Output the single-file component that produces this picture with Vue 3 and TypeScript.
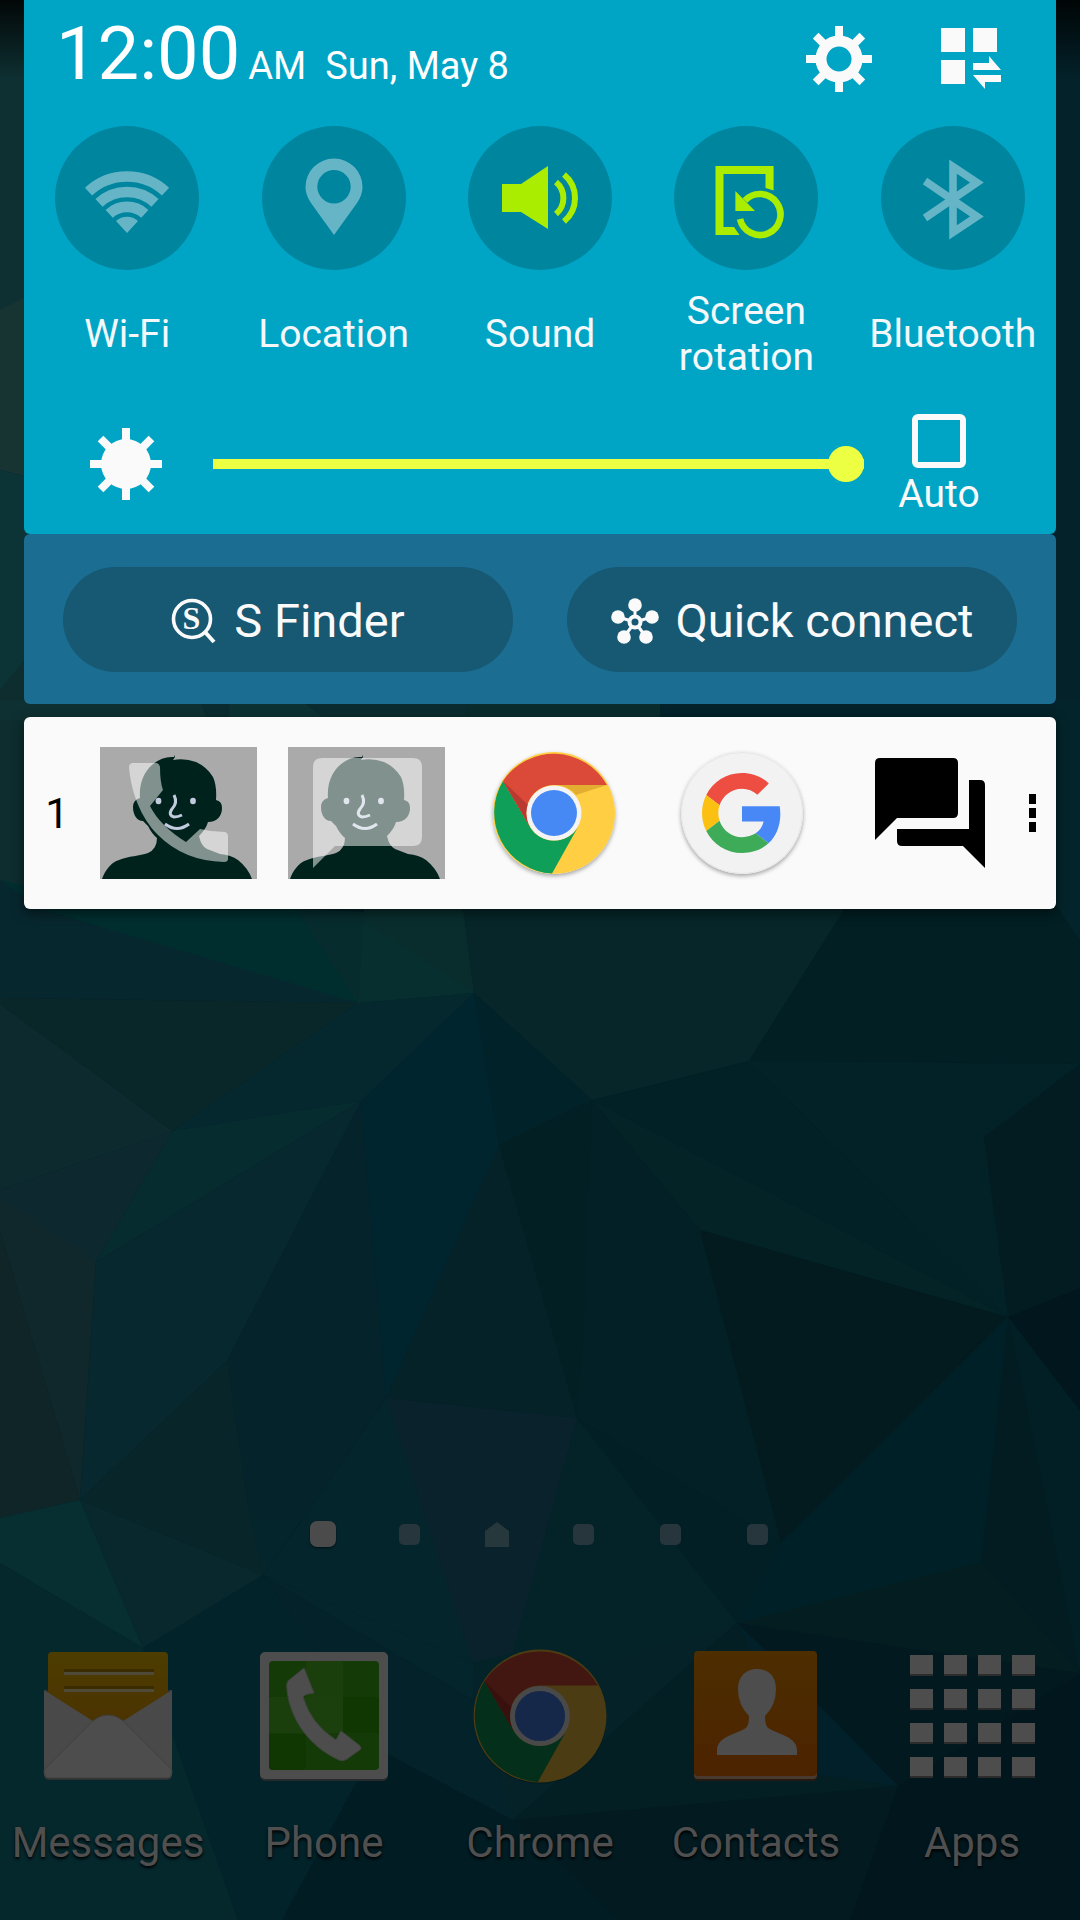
<script setup lang="ts">
import { ref } from 'vue'

interface Facet {
  points: string
  fill: string
}

interface Toggle {
  id: string
  label: string
  on: boolean
}

const facets: Facet[] = [
  { points: '0,0 40,0 40,400 0,460', fill: '#0e3032' },
  { points: '0,310 40,290 40,480 0,470', fill: '#173332' },
  { points: '0,470 40,480 40,660 0,690', fill: '#0c3437' },
  { points: '0,690 40,640 40,910 0,880', fill: '#0d2d2f' },
  { points: '0,700 240,700 240,720 0,720', fill: '#0f3032' },
  { points: '200,700 470,700 460,760 220,760', fill: '#0a2c31' },
  { points: '230,700 300,700 380,760 225,760', fill: '#0c3233' },
  { points: '470,700 660,700 660,760 460,760', fill: '#0a2c2d' },
  { points: '0,880 60,916 364,912 358,1003 0,998', fill: '#07272e' },
  { points: '40,909 296,909 358,1003', fill: '#002e2f' },
  { points: '0,880 40,909 40,890', fill: '#002e2f' },
  { points: '296,909 364,912 358,1003', fill: '#072c2e' },
  { points: '364,909 463,909 474,993 358,1003', fill: '#082f2f' },
  { points: '364,921 474,993 463,909 364,909', fill: '#092d2d' },
  { points: '463,905 847,905 749,1061 592,1100 474,993', fill: '#062629' },
  { points: '847,905 1080,905 1080,1064 749,1061', fill: '#021f23' },
  { points: '1056,905 1080,940 1080,700 1056,700', fill: '#03242a' },
  { points: '0,998 358,1003 172,1131 0,1004', fill: '#092629' },
  { points: '358,1003 474,993 361,1101 172,1131', fill: '#05282e' },
  { points: '0,1004 172,1131 0,1190', fill: '#0d2b2f' },
  { points: '0,1190 172,1131 96,1262 0,1198', fill: '#0d292f' },
  { points: '172,1131 361,1101 96,1262', fill: '#062c30' },
  { points: '0,1198 96,1262 80,1500 0,1231', fill: '#10282b' },
  { points: '0,1231 80,1500 0,1518', fill: '#0f2528' },
  { points: '96,1262 361,1101 227,1361 80,1500', fill: '#06282e' },
  { points: '361,1101 386,1398 303,1520 250,1520 227,1361', fill: '#04232a' },
  { points: '361,1101 474,993 499,1145 386,1398', fill: '#01252f' },
  { points: '474,993 592,1100 499,1145', fill: '#012229' },
  { points: '499,1145 577,1418 386,1398', fill: '#042227' },
  { points: '499,1145 592,1100 583,1340 577,1418', fill: '#021f24' },
  { points: '592,1100 700,1230 781,1543 577,1418 583,1340', fill: '#022026' },
  { points: '592,1100 1008,1317 700,1230', fill: '#032327' },
  { points: '592,1100 749,1061 1008,1317', fill: '#022126' },
  { points: '749,1061 1080,1064 984,1137 1008,1317', fill: '#022228' },
  { points: '1080,1064 984,1137 1008,1317 1080,1290', fill: '#031c22' },
  { points: '700,1230 1008,1317 781,1543', fill: '#031b1f' },
  { points: '1008,1317 1080,1288 1080,1411', fill: '#01171d' },
  { points: '1008,1317 981,1562 737,1623 781,1543', fill: '#002028' },
  { points: '1008,1317 981,1562 1080,1673 1046,1500', fill: '#021c22' },
  { points: '1008,1317 1080,1411 1080,1673 1046,1500', fill: '#021f25' },
  { points: '227,1361 250,1520 263,1575 80,1500', fill: '#082529' },
  { points: '386,1398 473,1663 263,1575 303,1520', fill: '#05252c' },
  { points: '250,1520 303,1520 386,1398 263,1575', fill: '#05252c' },
  { points: '386,1398 577,1418 513,1653 473,1663', fill: '#0a222b' },
  { points: '577,1418 737,1623 513,1820 473,1663 513,1653', fill: '#042329' },
  { points: '577,1418 781,1543 737,1623', fill: '#021f25' },
  { points: '0,1518 80,1500 143,1648 0,1563', fill: '#072f32' },
  { points: '0,1563 143,1648 172,1733 238,1920 0,1920', fill: '#05282d' },
  { points: '80,1500 263,1575 143,1648', fill: '#08282e' },
  { points: '143,1648 263,1575 389,1755 356,1783 282,1920 238,1920 172,1733', fill: '#02232a' },
  { points: '263,1575 473,1700 513,1820 389,1755', fill: '#042229' },
  { points: '263,1575 473,1663 473,1700', fill: '#04252c' },
  { points: '356,1783 389,1755 513,1820 620,1920 282,1920', fill: '#011c22' },
  { points: '737,1623 513,1820 473,1700', fill: '#042228' },
  { points: '737,1623 898,1786 513,1820', fill: '#031f24' },
  { points: '737,1623 981,1562 1080,1673', fill: '#041d21' },
  { points: '737,1623 1080,1673 898,1786', fill: '#02191f' },
  { points: '737,1623 765,1650 898,1786 815,1774', fill: '#012029' },
  { points: '898,1786 1080,1673 1080,1920 850,1920', fill: '#01171d' },
  { points: '513,1820 898,1786 850,1920 620,1920', fill: '#021a20' },
]

const toggles = ref<Toggle[]>([
  { id: 'wifi', label: 'Wi-Fi', on: false },
  { id: 'location', label: 'Location', on: false },
  { id: 'sound', label: 'Sound', on: true },
  { id: 'rotation', label: 'Screen rotation', on: true },
  { id: 'bluetooth', label: 'Bluetooth', on: false },
])

const brightness = ref<number>(100)
const autoBrightness = ref<boolean>(false)
const angles: number[] = [0, 45, 90, 135, 180, 225, 270, 315]
const pages: string[] = ['current', 'page', 'home', 'page', 'page', 'page']
const cells: number[] = [0, 1, 2, 3]
const apps: string[] = ['Messages', 'Phone', 'Chrome', 'Contacts', 'Apps']

const personPath =
  'M2 132C5 124 10 116 19 113C28 109 40 109 48 106Q57 102 57 91Q52 87 48 79L43 74C37 74 33 68 33 60Q33 53 40 51C39 38 43 26 52 18Q62 9 74 10L75 8V10L73 13Q85 11 96 15Q107 20 113 30Q117 39 116 53Q122 54 122 61C122 69 117 75 108 75Q106 82 99 89Q101 99 107 102L120 107Q131 108 138 113Q148 121 152 132Z'
</script>

<template>
  <main class="screen">
    <svg class="wallpaper" viewBox="0 0 1080 1920" preserveAspectRatio="none" aria-hidden="true">
      <defs>
        <linearGradient id="shade" x1="0" y1="0" x2="0" y2="1">
          <stop offset="0" stop-color="#000" stop-opacity="0.85" />
          <stop offset="1" stop-color="#000" stop-opacity="0" />
        </linearGradient>
      </defs>
      <rect width="1080" height="1920" fill="#03222a" />
      <polygon v-for="f in facets" :key="f.points + f.fill" :points="f.points" :fill="f.fill" />
      <rect width="1080" height="80" fill="url(#shade)" />
    </svg>

    <section class="quick">
      <header class="top">
        <div class="clock">
          <span class="time">12:00</span>
          <span class="ampm">AM</span>
          <span class="date">Sun, May 8</span>
        </div>
        <div class="actions">
          <button type="button" class="plain" aria-label="Settings">
            <svg width="66" height="66" viewBox="-33 -33 66 66">
              <circle r="18" fill="none" stroke="#fafafa" stroke-width="11" />
              <rect v-for="a in angles" :key="a" x="-4" y="-33" width="8" height="12" fill="#fafafa" :transform="`rotate(${a})`" />
            </svg>
          </button>
          <button type="button" class="plain" aria-label="Edit quick settings">
            <svg width="60" height="62" viewBox="0 0 60 62" fill="#fafafa">
              <path d="M0 0H24V24H0zM32 0H56V24H32zM0 32H24V56H0z" />
              <path d="M32 35H48V28L60 42H32zM60 47H32L44 61V54H60z" />
            </svg>
          </button>
        </div>
      </header>

      <div class="toggles">
        <button
          v-for="t in toggles"
          :key="t.id"
          type="button"
          class="toggle"
          :class="{ on: t.on }"
          :aria-pressed="t.on"
          @click="t.on = !t.on"
        >
          <svg class="disc" viewBox="0 0 144 144">
            <g v-if="t.id === 'wifi'">
              <g fill="none" stroke="currentColor" stroke-width="10.6">
                <path d="M33.5 65.6A56.7 56.7 0 0 1 110.5 65.6" />
                <path d="M44 76.8A41.5 41.5 0 0 1 100 76.8" />
                <path d="M54.2 87.8A26.4 26.4 0 0 1 89.8 87.8" />
              </g>
              <path d="M72 107L61 95A16.3 16.3 0 0 1 83 95z" fill="currentColor" />
            </g>
            <path
              v-else-if="t.id === 'location'"
              fill="currentColor"
              fill-rule="evenodd"
              d="M72 109L49 77Q43.500 69 43.500 61A28.500 28.500 0 0 1 100.500 61Q100.500 69 95 77zM72 44A16.700 16.700 0 1 0 72 77.400A16.700 16.700 0 1 0 72 44z"
            />
            <g v-else-if="t.id === 'sound'">
              <path d="M34 58H53L80 40V103L53 86H34z" fill="currentColor" />
              <g fill="none" stroke="currentColor" stroke-width="6">
                <path d="M88 56A21 21 0 0 1 88 88" />
                <path d="M96 48.500A30.600 30.600 0 0 1 96 95.500" />
              </g>
            </g>
            <g v-else-if="t.id === 'rotation'">
              <path d="M41.500 40H99.600V64.500L91.500 62V48H49.500V101H60L65.500 109H41.500z" fill="currentColor" />
              <path d="M66 93A20.500 20.500 0 1 0 71 74.500" fill="none" stroke="currentColor" stroke-width="6.6" />
              <path d="M61.400 65V85H81z" fill="currentColor" />
            </g>
            <path
              v-else
              d="M44 55L96 90.500L72 106.500V40.500L96 56.500L44 92"
              fill="none"
              stroke="currentColor"
              stroke-width="7.6"
              stroke-miterlimit="8"
            />
          </svg>
          <span class="toggle-label"><span>{{ t.label }}</span></span>
        </button>
      </div>

      <div class="brightness">
        <svg class="sun" width="72" height="74" viewBox="-36 -37 72 74" fill="#fafafa" aria-hidden="true">
          <circle r="25" />
          <rect v-for="a in angles" :key="a" x="-4" y="-36" width="8" height="16" :transform="`rotate(${a})`" />
        </svg>
        <input v-model.number="brightness" class="slider" type="range" min="0" max="100" aria-label="Brightness" />
        <label class="auto">
          <input v-model="autoBrightness" type="checkbox" />
          <span>Auto</span>
        </label>
      </div>
    </section>

    <section class="shortcuts">
      <button type="button" class="pill">
        <svg width="46" height="46" viewBox="0 0 46 46" aria-hidden="true">
          <circle cx="21" cy="21" r="18.5" fill="none" stroke="#fafafa" stroke-width="3.6" />
          <path d="M34 34L43 44" stroke="#fafafa" stroke-width="4" />
          <text x="20.500" y="31" text-anchor="middle" class="mark">S</text>
        </svg>
        <span>S Finder</span>
      </button>
      <button type="button" class="pill">
        <svg width="48" height="46" viewBox="0 0 48 46" aria-hidden="true">
          <path d="M24 24V7M24 24L7 19M24 24L41 19M24 24L13 39M24 24L35 39" stroke="#fafafa" stroke-width="3" />
          <g fill="#fafafa">
            <circle cx="24" cy="7" r="6.8" />
            <circle cx="7" cy="19" r="6.8" />
            <circle cx="41" cy="19" r="6.8" />
            <circle cx="13" cy="39" r="6.8" />
            <circle cx="35" cy="39" r="6.8" />
          </g>
          <circle cx="24" cy="24" r="5.5" fill="#175873" stroke="#fafafa" stroke-width="4" />
        </svg>
        <span>Quick connect</span>
      </button>
    </section>

    <section class="card">
      <span class="count">1</span>
      <button type="button" class="plain" aria-label="Call contact">
        <svg width="157" height="132" viewBox="0 0 157 132">
          <rect width="157" height="132" fill="#aaa" />
          <path :d="personPath" fill="#00221c" />
          <g fill="#c1cbdd">
            <ellipse cx="58.500" cy="54" rx="2.900" ry="3.200" />
            <ellipse cx="93" cy="54" rx="2.900" ry="3.200" />
          </g>
          <path d="M74 48C77 54 76 58 72 62C69 66 70 69 74 70Q78 70 82 68M65 77Q77 86 89 77" fill="none" stroke="#c1cbdd" stroke-width="3" />
          <path
            d="M32 16H56Q59 16 60 20Q60 35 63 43L50 59Q60 79 86 95L100 82Q112 85 125 85Q128 86 128 89V112Q128 115 124 115Q84 114 58 88C40 70 31 44 29 20Q29 17 32 16z"
            fill="#fff"
            fill-opacity="0.5"
          />
        </svg>
      </button>
      <button type="button" class="plain" aria-label="Message contact">
        <svg width="157" height="132" viewBox="0 0 157 132">
          <rect width="157" height="132" fill="#aaa" />
          <path :d="personPath" fill="#00221c" />
          <g fill="#c1cbdd">
            <ellipse cx="58.500" cy="54" rx="2.900" ry="3.200" />
            <ellipse cx="93" cy="54" rx="2.900" ry="3.200" />
          </g>
          <path d="M74 48C77 54 76 58 72 62C69 66 70 69 74 70Q78 70 82 68M65 77Q77 86 89 77" fill="none" stroke="#c1cbdd" stroke-width="3" />
          <path d="M34 11H125Q134 11 134 20V90Q134 99 125 99H47L25 121V20Q25 11 34 11z" fill="#fff" fill-opacity="0.5" />
        </svg>
      </button>
      <button type="button" class="plain round" aria-label="Chrome">
        <svg width="122" height="122" viewBox="-61 -61 122 122">
          <circle r="61" fill="#ffce42" />
          <path d="M-51 -32L-24 14A28 28 0 0 0 24 14L-2 60.500A61 61 0 0 1 -51 -32z" fill="#0f9f59" />
          <path d="M53 -28H0A28 28 0 0 0 -24 14L-51 -32A61 61 0 0 1 53 -28z" fill="#db4938" />
          <path d="M53 -28H0A28 28 0 0 1 22 -18z" fill="#e2ad31" />
          <path d="M-51 -32L-24 14A28 28 0 0 1 -26 -8z" fill="#b93a30" />
          <circle r="27.500" fill="#f4f4f4" />
          <circle r="23" fill="#4688f4" />
        </svg>
      </button>
      <button type="button" class="plain round" aria-label="Google">
        <svg width="122" height="122" viewBox="-61 -61 122 122">
          <circle r="60.500" fill="#f2f2f2" stroke="#e6e6e6" />
          <g transform="translate(-40 -40) scale(1.667)">
            <path fill="#ee4d41" d="M24 9.500c3.540 0 6.710 1.220 9.210 3.600l6.850-6.850C35.900 2.380 30.470 0 24 0 14.620 0 6.510 5.380 2.560 13.220l7.980 6.190C12.430 13.720 17.740 9.500 24 9.500z" />
            <path fill="#4788f6" d="M46.980 24.550c0-1.570-.150-3.090-.380-4.550H24v9.020h12.940c-.580 2.960-2.260 5.480-4.780 7.180l7.730 6c4.510-4.180 7.090-10.360 7.090-17.650z" />
            <path fill="#fbc012" d="M10.530 28.590c-.480-1.450-.760-2.990-.760-4.590s.270-3.140.760-4.590l-7.980-6.190C.920 16.460 0 20.120 0 24c0 3.880.920 7.540 2.560 10.780l7.970-6.190z" />
            <path fill="#3dab58" d="M24 48c6.480 0 11.930-2.130 15.890-5.810l-7.730-6c-2.150 1.450-4.920 2.300-8.160 2.300-6.260 0-11.570-4.220-13.470-9.910l-7.980 6.190C6.510 42.620 14.620 48 24 48z" />
          </g>
        </svg>
      </button>
      <button type="button" class="plain" aria-label="Conversations">
        <svg width="110" height="110" viewBox="0 0 110 110">
          <path d="M5 0H78Q83 0 83 5V55Q83 60 78 60H22L0 82V5Q0 0 5 0zM94 22H105Q110 22 110 27V110L88 88H27Q22 88 22 83V71H94z" />
        </svg>
      </button>
      <button type="button" class="plain more" aria-label="More">
        <svg width="7" height="38" viewBox="0 0 7 38">
          <path d="M0 0H7V10H0zM0 14H7V24H0zM0 28H7V38H0z" />
        </svg>
      </button>
    </section>

    <footer class="launcher">
      <div class="pages" aria-hidden="true">
        <span v-for="(p, i) in pages" :key="i" class="slot">
          <svg v-if="p === 'home'" width="24" height="26" viewBox="0 0 24 26">
            <path d="M0 10L12 1L24 10V26H0z" fill="#26383c" />
          </svg>
          <i v-else :class="['dot', p]"></i>
        </span>
      </div>
      <nav class="dock">
        <a v-for="name in apps" :key="name" href="#" class="app">
          <svg v-if="name === 'Messages'" width="140" height="140" viewBox="0 0 140 140">
            <defs>
              <linearGradient id="gold" x1="0" y1="0" x2="0" y2="1">
                <stop offset="0" stop-color="#4d3d00" />
                <stop offset="1" stop-color="#4b3200" />
              </linearGradient>
            </defs>
            <path d="M6 44V129Q6 134 11 134H129Q134 134 134 129V44z" fill="#2c3032" />
            <path d="M14 6H126Q130 6 130 10V60L85 84H55L10 60V10Q10 6 14 6z" fill="url(#gold)" />
            <path d="M26 23H116V26H26zM26 40H116V43H26z" fill="#3a2b00" />
            <path d="M26 26H116V29H26zM26 43H116V46H26z" fill="#4f4a38" />
            <path d="M6 44L55 75H85L134 44V127Q134 132 129 132H11Q6 132 6 127z" fill="#494949" />
            <path d="M6 124L56 74Q70 64 84 74L134 124Q134 132 129 132H11Q6 132 6 124z" fill="#4d4d4d" stroke="#404040" />
          </svg>
          <svg v-else-if="name === 'Phone'" width="140" height="140" viewBox="0 0 140 140">
            <rect x="6" y="7" width="128" height="128" rx="5" fill="#262a2c" />
            <rect x="6" y="6" width="128" height="127" rx="5" fill="#4d4d4d" />
            <rect x="15" y="15" width="110" height="109" rx="4" fill="#143a07" />
            <path d="M52 15H89V51H52zM15 51H52V87H15z" fill="#1a3f0c" />
            <path d="M52 51H89V87H52z" fill="#1b400d" />
            <path d="M89 51H125V87H89zM15 88H52V120Q52 124 48 124H19Q15 124 15 120z" fill="#103701" />
            <path d="M50 22L34 35Q32 38 33 44C36 72 54 100 85 114Q89 116 93 113L107 103Q107 101 105 99L87 85L82 94Q57 78 49 51Q50 48 60 47z" fill="#4d4d4d" stroke="#404540" stroke-width="1" />
          </svg>
          <svg v-else-if="name === 'Chrome'" width="140" height="140" viewBox="-70 -70 140 140">
            <g transform="scale(1.09)">
              <circle r="61" cy="1" fill="#031a1e" />
              <circle r="61" fill="#4c3c13" />
              <path d="M-51 -32L-24 14A28 28 0 0 0 24 14L-2 60.500A61 61 0 0 1 -51 -32z" fill="#04301b" />
              <path d="M53 -28H0A28 28 0 0 0 -24 14L-51 -32A61 61 0 0 1 53 -28z" fill="#421611" />
              <path d="M-51 -32L-24 14A28 28 0 0 1 -26 -8z" fill="#38110e" />
              <circle r="27.500" fill="#494949" />
              <circle r="23" fill="#152849" />
            </g>
          </svg>
          <svg v-else-if="name === 'Contacts'" width="140" height="140" viewBox="0 0 140 140">
            <defs>
              <linearGradient id="amber" x1="0" y1="0" x2="0" y2="1">
                <stop offset="0" stop-color="#4d2e00" />
                <stop offset="1" stop-color="#4c2300" />
              </linearGradient>
            </defs>
            <rect x="8" y="9" width="123" height="126" rx="4" fill="#241a12" />
            <rect x="8" y="9" width="123" height="124" rx="4" fill="#493a30" />
            <rect x="8" y="5" width="123" height="125" rx="4" fill="url(#amber)" />
            <path d="M71 23C82 23 90 30 90 43Q90 59 79 70Q79 79 82 82C92 88 111 91 111 104V109H31V104C31 91 50 88 60 82Q63 79 63 70Q52 59 52 43C52 30 60 23 71 23z" fill="#4d4d4d" />
          </svg>
          <svg v-else width="140" height="140" viewBox="0 0 140 140">
            <g v-for="r in cells" :key="r">
              <g v-for="c in cells" :key="c">
                <rect :x="8 + c * 34" :y="9 + r * 34" width="23" height="21" fill="#2c2c2c" />
                <rect :x="8 + c * 34" :y="9 + r * 34" width="23" height="19" fill="#4d4d4d" />
              </g>
            </g>
          </svg>
          <span>{{ name }}</span>
        </a>
      </nav>
    </footer>
  </main>
</template>

<style>
html,
body {
  margin: 0;
  background: #03222a;
}
</style>

<style scoped>
.screen {
  position: relative;
  z-index: 0;
  display: flex;
  flex-direction: column;
  box-sizing: border-box;
  min-height: 100vh;
  padding: 0 24px;
  font-family: Roboto, 'Noto Sans', sans-serif;
  color: #fafafa;
}
.wallpaper {
  position: absolute;
  inset: 0;
  z-index: -1;
  width: 100%;
  height: 100%;
}
svg {
  display: block;
}
button {
  font-family: inherit;
  color: inherit;
  cursor: pointer;
}
.plain {
  padding: 0;
  border: 0;
  background: none;
}

.quick {
  padding-bottom: 20px;
  border-radius: 0 0 6px 6px;
  background: #00a5c6;
}
.top {
  display: flex;
  justify-content: space-between;
  align-items: flex-end;
  padding: 14px 55px 32px 32px;
}
.clock {
  display: flex;
  align-items: baseline;
  line-height: 40px;
  color: #fff;
}
.time {
  font-size: 74px;
  line-height: 80px;
}
.ampm {
  margin-left: 8px;
  font-size: 38px;
}
.date {
  margin-left: 19px;
  font-size: 38px;
}
.actions {
  display: flex;
  align-items: center;
  gap: 69px;
  height: 70px;
}

.toggles {
  display: grid;
  grid-template-columns: repeat(5, 1fr);
}
.toggle {
  display: flex;
  flex-direction: column;
  align-items: center;
  gap: 18px;
  min-width: 0;
  padding: 0;
  border: 0;
  background: none;
  font-size: 39px;
  line-height: 46px;
}
.disc {
  width: 144px;
  height: 144px;
  border-radius: 50%;
  background: #00859f;
  color: #66b5c7;
}
.on .disc {
  color: #abed00;
}
.toggle-label {
  display: flex;
  align-items: center;
  justify-content: center;
  height: 92px;
  padding: 0 16px;
  color: #f4f8fa;
}

.brightness {
  display: flex;
  align-items: center;
  padding: 34px 42px 0 66px;
}
.sun {
  flex: none;
  margin-right: 51px;
}
.slider {
  flex: 1;
  min-width: 0;
  height: 36px;
  margin: 0;
  appearance: none;
  background: linear-gradient(#edff42, #edff42) center / 100% 10px no-repeat;
}
.slider::-webkit-slider-thumb {
  appearance: none;
  width: 36px;
  height: 36px;
  border-radius: 50%;
  background: #edff42;
}
.auto {
  display: flex;
  flex-direction: column;
  align-items: center;
  gap: 6px;
  width: 150px;
  font-size: 39px;
  line-height: 40px;
}
.auto input {
  box-sizing: border-box;
  width: 54px;
  height: 54px;
  margin: 0;
  appearance: none;
  border: 6px solid #fafafa;
  border-radius: 6px;
}
.auto input:checked {
  background: #edff42;
}

.shortcuts {
  display: grid;
  grid-template-columns: 1fr 1fr;
  gap: 54px;
  padding: 33px 39px 32px;
  border-radius: 6px;
  background: #1b6e92;
}
.pill {
  display: flex;
  align-items: center;
  justify-content: center;
  gap: 17px;
  height: 105px;
  padding: 2px 0 0;
  border: 0;
  border-radius: 53px;
  background: #175873;
  font-size: 47px;
  white-space: nowrap;
}
.mark {
  font: bold 32px 'Liberation Serif', serif;
  fill: #fafafa;
}

.card {
  display: grid;
  grid-template-columns: 61px repeat(5, 1fr) 32px;
  align-items: center;
  justify-items: center;
  height: 192px;
  margin-top: 13px;
  border-radius: 6px;
  background: #fafafa;
  box-shadow: 0 4px 12px rgba(0, 0, 0, 0.5);
  color: #000;
}
.count {
  padding-left: 5px;
  font-size: 42px;
}
.round {
  border-radius: 50%;
  box-shadow: 0 2px 4px rgba(0, 0, 0, 0.35);
}
.more {
  justify-self: start;
  padding-left: 5px;
}

.launcher {
  margin: auto -24px 0;
  padding-bottom: 53px;
}
.pages {
  display: flex;
  justify-content: center;
  margin-bottom: 99px;
}
.slot {
  display: flex;
  align-items: center;
  justify-content: center;
  width: 87px;
  height: 26px;
}
.dot {
  width: 21px;
  height: 21px;
  border-radius: 5px;
  background: #26363c;
}
.dot.current {
  width: 26px;
  height: 26px;
  border-radius: 7px;
  background: #4b4b4b;
  box-shadow: 0 1px 2px #001015;
}
.dock {
  display: grid;
  grid-template-columns: repeat(5, 1fr);
}
.app {
  display: flex;
  flex-direction: column;
  align-items: center;
  gap: 33px;
  color: #4f4f4f;
  font-size: 42px;
  line-height: 48px;
  text-decoration: none;
  text-shadow: 0 2px 3px #000;
}
</style>
